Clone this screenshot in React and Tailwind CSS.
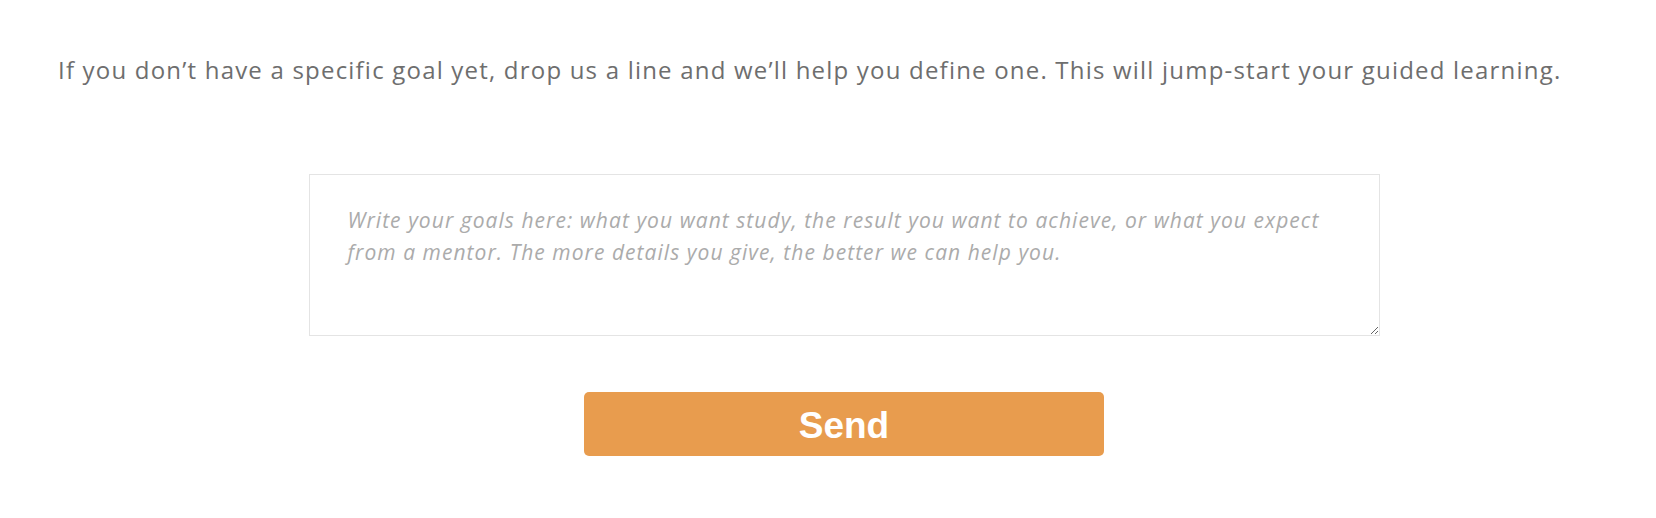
export default function App() {
  return (
    <main
      className="min-h-[518px] bg-white pl-[58px] pr-[26px] pt-[53px]"
      style={{ fontFamily: '"Open Sans", "Liberation Sans", sans-serif' }}
    >
      <p className="text-[24px] leading-[34px] tracking-[1.2px] text-[#6e6e6e] whitespace-nowrap">
        If you don’t have a specific goal yet, drop us a line and we’ll help you define one. This will jump-start your guided learning.
      </p>

      <form className="mt-[87px] flex flex-col items-center">
        <textarea
          className="block h-[162px] w-[1071px] resize-y border border-[#e4e4e4] px-[38px] pt-[29px] pb-[14px] text-[21px] leading-[32px] tracking-[1.05px] italic text-[#555] outline-none placeholder:text-[#ababab]"
          placeholder="Write your goals here: what you want study, the result you want to achieve, or what you expect from a mentor. The more details you give, the better we can help you."
        />
        <button
          type="button"
          className="mt-[56px] h-[64px] w-[520px] rounded-[5px] bg-[#e89c4e] pt-[3px] text-[37px] font-bold text-white"
          style={{ fontFamily: '"Liberation Sans", Arial, sans-serif' }}
        >
          Send
        </button>
      </form>
    </main>
  );
}
